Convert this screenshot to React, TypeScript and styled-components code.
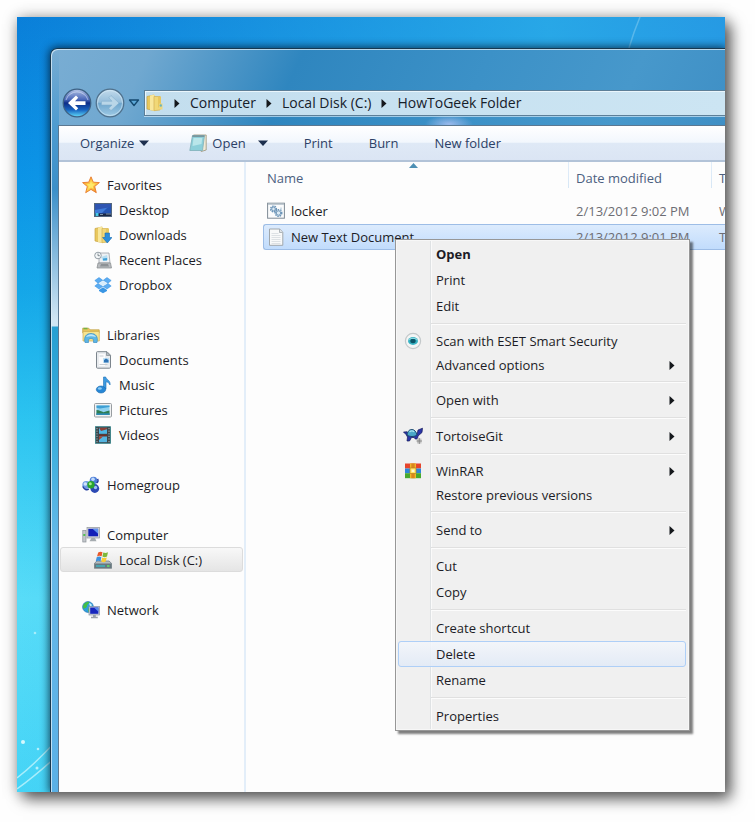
import React from "react";
import styled, { createGlobalStyle, css } from "styled-components";

const GlobalStyle = createGlobalStyle`
  * { box-sizing: border-box; }
  body {
    margin: 0;
    background: #fefefe;
    font-family: "Open Sans", "Noto Sans", sans-serif;
    font-size: 13px;
    line-height: 18px;
    color: #1c1c26;
  }
  button { font: inherit; color: inherit; border: 0; background: none; padding: 0; }
  svg { display: block; flex: none; }
`;

const Page = styled.div`
  display: flex;
  min-height: 100vh;
  padding: 17px 30px 30px 17px;
`;

const Desktop = styled.main`
  position: relative;
  flex: 1;
  min-width: 0;
  display: flex;
  padding: 31px 0 0 33px;
  overflow: clip;
  background:
    linear-gradient(90deg, rgba(50, 180, 235, 0) 0, rgba(50, 180, 235, 0.75) 75%, rgba(50, 165, 232, 0.7) 100%),
    linear-gradient(180deg, #0a7fd9 0, #0b93e6 20%, #14a6e8 35%, #2cc4f0 52%, #58dcf8 75%, #45d4f6 100%);
`;

const Shadow = styled.div`
  display: flex;
  flex: 1;
  min-width: 0;
  box-shadow: 6px 7px 14px rgba(0, 0, 0, 0.6), 0 0 14px rgba(0, 0, 0, 0.28);
`;

const Wallpaper = styled.svg`
  position: absolute;
  left: 0;
  bottom: 0;
`;

const TopStreak = styled.svg`
  position: absolute;
  top: 0;
  right: 80px;
`;

const Window = styled.section`
  position: relative;
  flex: 1;
  min-width: 0;
  display: flex;
  flex-direction: column;
  padding-left: 7px;
  border: solid #173850;
  border-width: 1px 0 0 1px;
  border-radius: 7px 0 0 0;
  box-shadow: 0 0 9px 1px rgba(0, 20, 40, 0.75), inset 1px 1px 0 rgba(225, 240, 250, 0.75);
  background:
    radial-gradient(ellipse 24px 9px at 398px 75px, rgba(165, 190, 240, 0.9), rgba(165, 190, 240, 0)),
    linear-gradient(180deg, rgba(115, 170, 208, 0) 0, #4d9bd0 80px, #3b8fc9 140px, #cfe5f3 270px, #cfe5f3 277px, #279fd2 278px, #3fb0de 400px, #68b9e9 500px, #5ab0e6 100%) 0 0 / 8px 100% no-repeat,
    linear-gradient(115deg, #79add3 0, #70a8d0 90px, #2f86bf 230px, #3c91c7 400px, #4798cb 540px, #3989c1 720px);
`;

const TitleBar = styled.header`
  height: 39px;
`;

const NavRow = styled.nav`
  display: flex;
  align-items: center;
  height: 30px;
  margin-bottom: 7px;
  padding-left: 4px;
`;

const Capsule = styled.div`
  display: flex;
  align-items: center;
  gap: 3px;
  margin-right: 4px;
`;

const AddressBar = styled.div`
  flex: 1;
  min-width: 0;
  display: flex;
  align-items: center;
  gap: 10px;
  height: 26px;
  padding-left: 1px;
  white-space: nowrap;
  overflow: hidden;
  font-size: 14px;
  color: #16202a;
  border: solid #5d7f98;
  border-width: 1px 0 1px 1px;
  box-shadow: inset 1px 1px 0 #eaf6fc, 0 1px 0 rgba(230, 245, 255, 0.6);
  background: linear-gradient(90deg, #c3deee, #cce5f3);
`;

const Crumb = styled.a`
  color: inherit;
  text-decoration: none;
`;

const Client = styled.div`
  flex: 1;
  display: flex;
  flex-direction: column;
  border: solid #5c7891;
  border-width: 1px 0 0 1px;
  background: #fdfdfd;
`;

const Toolbar = styled.div`
  display: flex;
  align-items: center;
  height: 36px;
  padding-left: 21px;
  white-space: nowrap;
  overflow: hidden;
  color: #2c4166;
  border-bottom: 2px solid #b2c3d8;
  background: linear-gradient(180deg, #ffffff 0, #f2f7fd 48%, #dfe9f6 50%, #dbe5f4 100%);
`;

const ToolButton = styled.button<{ $space: number }>`
  display: flex;
  align-items: center;
  gap: 5px;
  margin-right: ${(p) => p.$space}px;
`;

const Body = styled.div`
  flex: 1;
  display: flex;
  min-height: 0;
`;

const Sidebar = styled.aside`
  flex: none;
  width: 187px;
  padding: 10px 1px 20px;
  border-right: 2px solid #e3eef9;
`;

const Group = styled.div`
  margin-bottom: 25px;
`;

const Place = styled.a<{ $child?: boolean; $selected?: boolean }>`
  display: flex;
  align-items: center;
  gap: 7px;
  height: 25px;
  padding-left: ${(p) => (p.$child ? 33 : 21)}px;
  color: inherit;
  text-decoration: none;
  border: 1px solid transparent;
  border-radius: 3px;
  ${(p) =>
    p.$selected &&
    css`
      border-color: #dcdcdc;
      background: linear-gradient(#f8f8f8, #e5e5e5);
    `}
`;

const Content = styled.div`
  position: relative;
  flex: 1;
  min-width: 0;
  padding-left: 17px;
`;

const FileTable = styled.table`
  width: 100%;
  table-layout: fixed;
  border-spacing: 0;
  white-space: nowrap;
`;

const HeadCell = styled.th<{ $width?: number; $first?: boolean }>`
  position: relative;
  width: ${(p) => (p.$width ? `${p.$width}px` : "auto")};
  height: 36px;
  padding: 7px 0 0 ${(p) => (p.$first ? 4 : 8)}px;
  overflow: hidden;
  vertical-align: top;
  text-align: left;
  font-weight: 400;
  color: #4c6080;
  background: ${(p) =>
    p.$first ? "none" : "linear-gradient(#e2eefa, #d6e6f5) 0 0 / 1px 26px no-repeat"};
`;

const SortMark = styled.svg`
  position: absolute;
  top: 1px;
  left: 146px;
`;

const Cell = styled.td<{ $dim?: boolean }>`
  height: 26px;
  padding: 0 0 0 ${(p) => (p.$dim ? 8 : 4)}px;
  overflow: hidden;
  color: ${(p) => (p.$dim ? "#6d6d74" : "inherit")};
`;

const Row = styled.tr<{ $selected?: boolean }>`
  ${(p) =>
    p.$selected &&
    css`
      ${Cell} {
        border: solid #9dbde6;
        border-width: 1px 0;
        background: linear-gradient(#dcebfd, #c1dcfc);
      }
      ${Cell}:first-child {
        border-left-width: 1px;
        border-radius: 3px 0 0 3px;
        padding-left: 3px;
      }
    `}
`;

const FileName = styled.span`
  display: flex;
  align-items: center;
  gap: 6px;
`;

const Menu = styled.div`
  position: absolute;
  top: 77px;
  left: 149px;
  width: 295px;
  padding: 1px 3px 1px 2px;
  border: 1px solid #979797;
  box-shadow: 3px 3px 2px rgba(0, 0, 0, 0.5), inset 0 0 0 1px #f7f7f7;
  background: linear-gradient(90deg, #dfe2e4 1px, #fafafa 1px) 34px 0 / 2px 100% no-repeat #f0f0f0;
`;

const MenuItem = styled.button<{ $short?: boolean; $bold?: boolean; $hot?: boolean }>`
  display: grid;
  grid-template-columns: 37px 1fr 16px;
  align-items: center;
  width: 100%;
  height: ${(p) => (p.$short ? 24 : 26)}px;
  text-align: left;
  white-space: nowrap;
  font-weight: ${(p) => (p.$bold ? 700 : 400)};
  border: 1px solid ${(p) => (p.$hot ? "#aecff7" : "transparent")};
  border-radius: 3px;
  background: ${(p) =>
    p.$hot ? "linear-gradient(rgba(243, 246, 251, 0.85), rgba(225, 234, 247, 0.85))" : "none"};
`;

const IconSlot = styled.span`
  display: flex;
  justify-content: center;
  padding-right: 9px;
`;

const Separator = styled.hr`
  height: 2px;
  margin: 4px 0 4px 33px;
  border: 0;
  border-top: 1px solid #e0e0e0;
  background: #fcfcfc;
`;

/* ---------- icons ---------- */

const Icon = ({ children, size = 18 }: { children: React.ReactNode; size?: number }) => (
  <svg width={size} height={size} viewBox="0 0 18 18" aria-hidden="true">
    {children}
  </svg>
);

const StarIcon = () => (
  <Icon>
    <defs>
      <linearGradient id="star" x1="0" y1="0" x2="1" y2="1">
        <stop offset="0" stopColor="#f58a1f" />
        <stop offset=".5" stopColor="#ffd94f" />
        <stop offset="1" stopColor="#f07a1c" />
      </linearGradient>
    </defs>
    <path d="M9 .8l2.3 5.4 6.1.4-4.7 3.9 1.6 6.2L9 13.4l-5.3 3.3 1.6-6.2L.6 6.6l6.1-.4z" fill="url(#star)" stroke="#e8792b" strokeWidth=".9" strokeLinejoin="round" />
    <path d="M9 5l1.2 3 3 .3-2.3 2 .6 2.7L9 11.5l-2.6 1.3.6-2.7-2.2-1.9 3-.3z" fill="#ffe96b" />
  </Icon>
);

const DesktopIcon = () => (
  <Icon>
    <rect x=".5" y="2.500" width="17" height="13" fill="#2455b4" stroke="#52667f" />
    <path d="M1 3h16L8 12H1z" fill="#3f7bd8" />
    <path d="M1 3h16v3L1 9z" fill="#2f55b2" />
    <rect x="1" y="12.500" width="16" height="2.500" fill="#1a2743" />
    <rect x="1.500" y="12" width="3" height="3" fill="#46c7e6" />
    <path d="M12 13h5M6 13.500h3" stroke="#7d93a7" />
  </Icon>
);

const FolderBook = () => (
  <>
    <path d="M1 2.500L8 1v15.500L1 15z" fill="#e9c85f" stroke="#c9a543" strokeWidth=".7" />
    <path d="M4 1.500L8.500 .6v16.300L4 16z" fill="#f8e79c" />
    <path d="M8 2.500h6V16l-6 .7z" fill="#f1d877" stroke="#d1b055" strokeWidth=".7" />
    <path d="M12 2.500h3v11h-3z" fill="#e7c75f" />
  </>
);

const DownloadsIcon = () => (
  <Icon>
    <FolderBook />
    <path d="M11 7h4.500v4.500H18L13.300 17 8.600 11.500H11z" fill="#2b8edb" stroke="#176cb3" strokeWidth=".6" />
  </Icon>
);

const FolderIcon = () => (
  <Icon>
    <FolderBook />
    <rect x="13" y="9.500" width="3.500" height="6" fill="#efd67c" />
    <circle cx="14.800" cy="11.500" r="1.200" fill="#6cb6bd" />
  </Icon>
);

const RecentIcon = () => (
  <Icon>
    <path d="M5 2h10l1 10H5z" fill="#eef1f4" stroke="#9aa0a6" strokeWidth=".8" />
    <path d="M7 6l6-2 1 5-5 1z" fill="#b8def1" />
    <path d="M9 7.500l4-.5v2.500H9z" fill="#3fa0d8" />
    <path d="M4 12h12.500l1 5H3z" fill="#b9bcbf" stroke="#85898d" strokeWidth=".7" />
    <path d="M7 13h7l1 2.500H6z" fill="#8c9195" />
    <circle cx="4" cy="4.500" r="3.300" fill="#f4f7f9" stroke="#8a959d" strokeWidth=".9" />
    <path d="M4 2.500v2.200h1.800" stroke="#65727a" fill="none" strokeWidth=".8" />
  </Icon>
);

const DropboxIcon = () => (
  <Icon>
    <path d="M5 1.500L.8 4.500 4 7.200 8.800 4.300zM13 1.500l4.200 3L14 7.200 9.200 4.300zM.8 10L4 7.400l4.800 3L5 13zM17.200 10L14 7.400l-4.800 3L13 13z" fill="#5cacf1" stroke="#318fe0" strokeWidth=".5" />
    <path d="M9 11.300l-4 2.700v1l4 2.200 4-2.200v-1z" fill="#3a96e4" />
    <path d="M9 4.800l4 2.500-4 2.600-4-2.600z" fill="#d8edfc" />
  </Icon>
);

const LibrariesIcon = () => (
  <Icon>
    <path d="M.7 2.200h6l1.500 1.600h9v3H.7z" fill="#e8c55d" stroke="#bf9c3d" strokeWidth=".7" />
    <path d="M1.500 1.800h4v1.500h-4z" fill="#75b344" />
    <path d="M1 5.500h16.300v9.500H1z" fill="#f7e491" stroke="#cfae52" strokeWidth=".7" />
    <path d="M3 16.500c-1.500-6 1.500-9 6-9s7.500 3 6 9h-3.500c.5-3-.5-4-2.500-4s-3 1-2.500 4z" fill="#5cb6e6" stroke="#398ec4" strokeWidth=".7" />
    <path d="M4 11c1-2 3-2.800 5-2.800s4 .8 5 2.800c-3-1-7-1-10 0z" fill="#bfe6f8" />
  </Icon>
);

const DocumentsIcon = () => (
  <Icon>
    <path d="M2.500 1.500Q2.500.7 3.300.7H13l3.500 3.500v12q0 1-1 1h-12q-1 0-1-1z" fill="#e9ecef" stroke="#7c858d" />
    <path d="M5 3h6v12H5z" fill="#fbfbfc" />
    <path d="M12.500 1v3.500H16z" fill="#b9c1c8" stroke="#7c858d" strokeWidth=".7" />
    <rect x="9" y="7" width="6" height="5" fill="#bfe1f4" />
    <path d="M10 11.500V9l2-1.500L14.500 9v2.500z" fill="#2e72b5" />
    <path d="M5.500 5h4M5.500 13.500h8" stroke="#c6cdd3" />
  </Icon>
);

const MusicIcon = () => (
  <Icon>
    <path d="M9.500 1h2.200c.5 2.500 5.200 3.500 4.300 8-.8-2-2.200-3-4-3.200V13H9.500z" fill="#3d9ae0" stroke="#1e72b8" strokeWidth=".6" />
    <ellipse cx="7" cy="13.500" rx="4.700" ry="3.500" fill="#2687d6" stroke="#1a68ab" strokeWidth=".6" />
    <ellipse cx="5.800" cy="12.500" rx="2" ry="1.200" fill="#8ccbf4" />
  </Icon>
);

const PicturesIcon = () => (
  <Icon>
    <rect x=".5" y="2.500" width="17" height="13.500" rx="1" fill="#f1f2f3" stroke="#989da1" />
    <rect x="2.500" y="4.500" width="13" height="9.500" fill="#8fd2f0" />
    <path d="M2.500 4.500h13V6L6 7.500l-3.500-.8z" fill="#3e9fd4" />
    <path d="M2.500 9c3 .2 5 1.500 7 2.200 2-.6 4-1.400 6-1.600V14h-13z" fill="#2f7d52" />
    <path d="M2.500 12.300h13V14h-13z" fill="#2d8ab4" />
  </Icon>
);

const VideosIcon = () => (
  <Icon>
    <rect x="1.500" y=".7" width="15" height="16.600" fill="#3c474c" stroke="#2e7f86" strokeWidth=".8" />
    <path d="M3 2v14.500M15 2v14.500" stroke="#a9b8bc" strokeWidth="1" strokeDasharray="1.200 1.400" />
    <rect x="5" y="1.800" width="8" height="6" fill="#4fb6e3" />
    <path d="M5 1.800h8v1.500L7 5z" fill="#8c4036" />
    <path d="M5 8.500h8v2H5z" fill="#6e3028" />
    <rect x="5" y="10.500" width="8" height="5.700" fill="#55b4e0" />
    <path d="M5 10.500h4L5 14z" fill="#a8442f" />
  </Icon>
);

const HomegroupIcon = () => (
  <Icon>
    <circle cx="11.500" cy="4.500" r="3.800" fill="#4d7fd8" />
    <circle cx="11" cy="3.300" r="1.800" fill="#c1dafa" />
    <circle cx="4.300" cy="9" r="4" fill="#6f9de6" />
    <circle cx="3.300" cy="8" r="1.800" fill="#d0e3fc" />
    <circle cx="12.800" cy="12.500" r="4.400" fill="#2c49b4" />
    <circle cx="13.500" cy="11.500" r="1.700" fill="#9fc0f4" />
    <path d="M.8 10.500c1.500 3 4 4 6 2.500M14.500 7c1.500-1 2-2.500 1-4" stroke="#233c9e" strokeWidth="1.500" fill="none" />
    <circle cx="9" cy="8.800" r="3.700" fill="#2aa52f" />
    <circle cx="8.300" cy="7.800" r="1.500" fill="#a5ea8e" />
  </Icon>
);

const ComputerIcon = () => (
  <Icon>
    <rect x=".8" y="4.500" width="3.200" height="11.500" fill="#c4c8cc" stroke="#8b9196" strokeWidth=".7" />
    <rect x="1.300" y="8" width="2" height="2" fill="#51c150" />
    <rect x="5" y="1.500" width="12.500" height="10.500" fill="#d6d8da" stroke="#90969b" strokeWidth=".7" />
    <rect x="6.300" y="2.800" width="9.800" height="7.500" fill="#1420b8" />
    <path d="M10.500 2.800h5.600v5z" fill="#5f92ee" />
    <path d="M9.500 12h3.500l1.500 3.300H7.500z" fill="#a6acb0" />
  </Icon>
);

const DiskIcon = () => (
  <Icon>
    <path d="M3 10h12l2.700 2.500v4.800H.3v-4.800z" fill="#b3bbc0" stroke="#69757c" strokeWidth=".7" />
    <path d="M.5 12.500h17v4.600H.5z" fill="#67787f" />
    <path d="M2 15h9" stroke="#3fb5c2" strokeWidth="1.500" />
    <path d="M13 15h2.500" stroke="#5fe56d" strokeWidth="1.500" />
    <path d="M4.200 1.500Q6.500 0 8.500 1.200L7.600 5.300Q5.400 4.200 3 5.500z" fill="#e8582a" />
    <path d="M9.300 1.600Q11.500 2.700 14 1.300L13 5.500Q10.700 6.800 8.400 5.600z" fill="#7db83b" />
    <path d="M2.700 6.300Q5.200 5 7.400 6.200L6.500 10.300Q4.200 9.200 1.700 10.500z" fill="#3c91dd" />
    <path d="M8.200 6.500Q10.400 7.700 12.800 6.400L11.700 10.500Q9.500 11.800 7.300 10.600z" fill="#f9cc35" />
  </Icon>
);

const NetworkIcon = () => (
  <Icon>
    <circle cx="6" cy="6" r="5.400" fill="#2d9fdc" stroke="#2574b4" strokeWidth=".7" />
    <path d="M2 3c2-2 4-2.500 5-2 .5 2-2 2-2 4s-2 1.500-3 3C.6 6.500.8 4.500 2 3zM6 7.500h4L8 11l-2-.5z" fill="#43bf47" />
    <path d="M7 2.500c1-.5 2.500.5 3 2l-2 .8z" fill="#c9f0fa" />
    <rect x="7" y="5.500" width="10.500" height="8.500" fill="#ccd3da" stroke="#8791a0" strokeWidth=".7" />
    <rect x="8.200" y="6.500" width="8.200" height="6.300" fill="#1726bd" />
    <path d="M12 6.500h4.400v4.300z" fill="#588aec" />
    <path d="M11 14h2.800v1.800h2v1.400H9v-1.400h2z" fill="#9ba2aa" />
  </Icon>
);

const NotepadIcon = () => (
  <Icon>
    <path d="M4.500 1h12.700v15l-5 1.500z" fill="#efe9d6" stroke="#9b9277" strokeWidth=".8" />
    <path d="M3.500 1.500h12L13.500 16.500H.8z" fill="#8ccfd9" stroke="#7fb0b9" strokeWidth=".8" />
    <path d="M4.500 4h8.800l-.8 6L3.500 12z" fill="#b9e6ea" />
    <path d="M3.500 1.500h12l-.2 1.300H3.200z" fill="#72848b" />
  </Icon>
);

const Gear = ({ cx, cy, r }: { cx: number; cy: number; r: number }) => (
  <g>
    <circle cx={cx} cy={cy} r={r} fill="none" stroke="#6a94b8" strokeWidth="1.600" strokeDasharray="1.500 .8" />
    <circle cx={cx} cy={cy} r={r - 1} fill="#dcebf5" stroke="#5d88ad" strokeWidth=".8" />
  </g>
);

const BatchIcon = () => (
  <Icon>
    <rect x=".6" y="1.200" width="16.800" height="15" fill="#fafbfc" stroke="#7f8b95" />
    <path d="M1 2.200h16" stroke="#b6c2cc" strokeWidth="1.300" />
    <Gear cx={6.5} cy={7} r={2.8} />
    <Gear cx={11.5} cy={11} r={3.2} />
    <path d="M14 5.500v4" stroke="#a9c2d4" />
  </Icon>
);

const TextFileIcon = () => (
  <Icon>
    <path d="M2.500 1h10.300l3 3.300v13H2.500z" fill="#f8f9f9" stroke="#a0a7ac" />
    <path d="M12.500 1v3.500h3.200" fill="#dfe4e7" stroke="#a0a7ac" strokeWidth=".8" />
    <path d="M4.500 5.500h7M4.500 7.500h9M4.500 9.500h9M4.500 11.500h9M4.500 13.500h9M4.500 15.500h9" stroke="#dde1e4" />
  </Icon>
);

const EsetIcon = () => (
  <Icon>
    <circle cx="9" cy="9" r="7.600" fill="#f3f5f5" stroke="#c3c8ca" strokeWidth="1.200" />
    <ellipse cx="9" cy="9" rx="5" ry="3.900" fill="#39b3c4" />
    <ellipse cx="9" cy="9" rx="2.700" ry="2.200" fill="#0c5568" />
    <path d="M4.800 8c2-2.300 6.400-2.300 8.400 0" stroke="#9de3ea" fill="none" />
  </Icon>
);

const TortoiseIcon = () => (
  <svg width="20" height="18" viewBox="0 0 20 18" aria-hidden="true">
    <path d="M.5 5l3.500-.2L6 8l8-.5 1-4.500 4.500-1.800L19 5.500 15 9l-.5 3h-2.300l-1-1.500H8.500L6.500 14H4l.5-4L3 7.500z" fill="#2a35a8" stroke="#161b5c" strokeWidth=".7" />
    <path d="M4 8c.5-4 2.500-5.500 5-5.500S13.500 5 14 8c-3 2-7 2-10 0z" fill="#4aa7c9" stroke="#153f66" strokeWidth=".9" />
    <path d="M6.500 5c1.500-1.500 3.500-1.500 4.500 0" stroke="#a8e4ef" strokeWidth="1.200" fill="none" />
    <path d="M14 11.500h4.500v5H14z" fill="#c4c4c4" />
    <path d="M13.500 14h5.500M16.300 11v6" stroke="#858585" strokeWidth=".9" />
  </svg>
);

const WinrarIcon = () => (
  <Icon>
    <path d="M1 1.500h16v5H1z" fill="#e6452c" />
    <path d="M1 6.500h16v4.700H1z" fill="#2d86da" />
    <path d="M1 11.200h16v5H1z" fill="#47a92d" />
    <path d="M6 1.500h6v14.700H6z" fill="#f0b92a" />
    <path d="M7.300 1.500h3.400v14.700H7.300z" fill="#d9861d" />
    <rect x="6" y="6" width="6" height="5.500" fill="#ffe868" stroke="#b97f1f" strokeWidth=".7" />
    <rect x="7.700" y="7.700" width="2.600" height="2.300" fill="#fff9d5" />
  </Icon>
);

const BackIcon = () => (
  <svg width="30" height="30" viewBox="0 0 30 30" aria-hidden="true">
    <defs>
      <linearGradient id="back" x1="0" y1="0" x2="0" y2="1">
        <stop offset="0" stopColor="#b3c3e6" />
        <stop offset=".38" stopColor="#4866b8" />
        <stop offset=".5" stopColor="#0d2c86" />
        <stop offset=".75" stopColor="#1763c0" />
        <stop offset="1" stopColor="#62dcfa" />
      </linearGradient>
    </defs>
    <circle cx="15" cy="15" r="13.800" fill="url(#back)" stroke="#3d6184" strokeWidth="1.200" />
    <path d="M4 12a11.500 11.500 0 0 1 22 0" fill="none" stroke="#d9e4f5" strokeOpacity=".6" />
    <path d="M6 15l8-7.500 2.200 2.300-3.200 3.400h10.500v3.800H13l3.200 3.300-2.200 2.300z" fill="#fff" />
  </svg>
);

const ForwardIcon = () => (
  <svg width="30" height="30" viewBox="0 0 30 30" aria-hidden="true">
    <defs>
      <linearGradient id="fwd" x1="0" y1="0" x2="0" y2="1">
        <stop offset="0" stopColor="#c3dbec" />
        <stop offset=".47" stopColor="#94bdda" />
        <stop offset=".52" stopColor="#6fa6cd" />
        <stop offset="1" stopColor="#9fcbe6" />
      </linearGradient>
    </defs>
    <circle cx="15" cy="15" r="13.800" fill="url(#fwd)" stroke="#50718c" strokeWidth="1.200" />
    <circle cx="15" cy="15" r="12.500" fill="none" stroke="#d9ecf8" strokeOpacity=".6" />
    <path d="M24 15l-8-7.500-2.200 2.300 3.200 3.400H6.500v3.800H17l-3.200 3.300 2.200 2.300z" fill="#b9d6e8" stroke="#84b0cf" strokeWidth=".6" />
  </svg>
);

const HistoryIcon = () => (
  <svg width="12" height="8" viewBox="0 0 12 8" aria-hidden="true">
    <path d="M1.500 1h9L6 6.500z" fill="#5ba8d8" stroke="#14486f" strokeWidth="1.300" strokeLinejoin="round" />
  </svg>
);

const RightArrow = () => (
  <svg width="6" height="9" viewBox="0 0 6 9" aria-hidden="true">
    <path d="M.5 0L5.500 4.500.5 9z" fill="#15181c" />
  </svg>
);

const DownArrow = () => (
  <svg width="10" height="6" viewBox="0 0 10 6" aria-hidden="true">
    <path d="M0 .5h10L5 6z" fill="#1d2f4e" />
  </svg>
);

/* ---------- data ---------- */

type PlaceData = { label: string; icon: React.ReactNode; selected?: boolean };

const places: PlaceData[][] = [
  [
    { label: "Favorites", icon: <StarIcon /> },
    { label: "Desktop", icon: <DesktopIcon /> },
    { label: "Downloads", icon: <DownloadsIcon /> },
    { label: "Recent Places", icon: <RecentIcon /> },
    { label: "Dropbox", icon: <DropboxIcon /> },
  ],
  [
    { label: "Libraries", icon: <LibrariesIcon /> },
    { label: "Documents", icon: <DocumentsIcon /> },
    { label: "Music", icon: <MusicIcon /> },
    { label: "Pictures", icon: <PicturesIcon /> },
    { label: "Videos", icon: <VideosIcon /> },
  ],
  [{ label: "Homegroup", icon: <HomegroupIcon /> }],
  [
    { label: "Computer", icon: <ComputerIcon /> },
    { label: "Local Disk (C:)", icon: <DiskIcon />, selected: true },
  ],
  [{ label: "Network", icon: <NetworkIcon /> }],
];

type Entry = {
  label: string;
  icon?: React.ReactNode;
  sub?: boolean;
  short?: boolean;
  bold?: boolean;
  hot?: boolean;
};

const menu: Entry[][] = [
  [{ label: "Open", bold: true }, { label: "Print" }, { label: "Edit" }],
  [
    { label: "Scan with ESET Smart Security", icon: <EsetIcon />, short: true },
    { label: "Advanced options", sub: true, short: true },
  ],
  [{ label: "Open with", sub: true }],
  [{ label: "TortoiseGit", icon: <TortoiseIcon />, sub: true }],
  [
    { label: "WinRAR", icon: <WinrarIcon />, sub: true, short: true },
    { label: "Restore previous versions", short: true },
  ],
  [{ label: "Send to", sub: true }],
  [{ label: "Cut" }, { label: "Copy" }],
  [{ label: "Create shortcut" }, { label: "Delete", hot: true }, { label: "Rename" }],
  [{ label: "Properties" }],
];

const crumbs = ["Computer", "Local Disk (C:)", "HowToGeek Folder"];

const ContextMenu = () => (
  <Menu role="menu">
    {menu.map((group, g) => (
      <React.Fragment key={g}>
        {g > 0 && <Separator />}
        {group.map((e) => (
          <MenuItem key={e.label} type="button" role="menuitem" $short={e.short} $bold={e.bold} $hot={e.hot}>
            <IconSlot>{e.icon}</IconSlot>
            <span>{e.label}</span>
            {e.sub && <RightArrow />}
          </MenuItem>
        ))}
      </React.Fragment>
    ))}
  </Menu>
);

export default function App() {
  return (
    <>
      <GlobalStyle />
      <Page>
        <Shadow>
          <Desktop>
            <Wallpaper width="40" height="180" viewBox="0 0 40 180" aria-hidden="true">
              <path d="M0 166Q18 152 40 128M0 177Q18 164 40 144" fill="none" stroke="#c9f6fc" strokeOpacity=".75" strokeWidth="1.500" />
              <circle cx="6" cy="130" r="2" fill="#d5f8fd" />
              <circle cx="21" cy="137" r="1.300" fill="#b5f0fb" />
              <circle cx="20" cy="156" r="1.500" fill="#b5f0fb" />
              <circle cx="18" cy="21" r="1.300" fill="#a5edfa" />
            </Wallpaper>
            <TopStreak width="20" height="31" viewBox="0 0 20 31" aria-hidden="true">
              <path d="M15 0Q9 14 4 31" fill="none" stroke="#a5dcf5" strokeOpacity=".4" strokeWidth="1.500" />
            </TopStreak>
            <Window aria-label="HowToGeek Folder">
              <TitleBar />
              <NavRow>
                <Capsule>
                  <button type="button" aria-label="Back">
                    <BackIcon />
                  </button>
                  <button type="button" aria-label="Forward">
                    <ForwardIcon />
                  </button>
                  <button type="button" aria-label="Recent pages">
                    <HistoryIcon />
                  </button>
                </Capsule>
                <AddressBar>
                  <FolderIcon />
                  {crumbs.map((c) => (
                    <React.Fragment key={c}>
                      <RightArrow />
                      <Crumb href="#">{c}</Crumb>
                    </React.Fragment>
                  ))}
                </AddressBar>
              </NavRow>
              <Client>
                <Toolbar>
                  <ToolButton type="button" $space={40}>
                    Organize <DownArrow />
                  </ToolButton>
                  <ToolButton type="button" $space={12}>
                    <NotepadIcon /> Open
                  </ToolButton>
                  <ToolButton type="button" aria-label="Open with" $space={36}>
                    <DownArrow />
                  </ToolButton>
                  <ToolButton type="button" $space={36}>
                    Print
                  </ToolButton>
                  <ToolButton type="button" $space={36}>
                    Burn
                  </ToolButton>
                  <ToolButton type="button" $space={0}>
                    New folder
                  </ToolButton>
                </Toolbar>
                <Body>
                  <Sidebar>
                    {places.map((group, g) => (
                      <Group key={g}>
                        {group.map((p, i) => (
                          <Place key={p.label} href="#" $child={i > 0} $selected={p.selected}>
                            {p.icon}
                            {p.label}
                          </Place>
                        ))}
                      </Group>
                    ))}
                  </Sidebar>
                  <Content>
                    <FileTable>
                      <thead>
                        <tr>
                          <HeadCell $width={305} $first>
                            Name
                            <SortMark width="9" height="5" viewBox="0 0 9 5" aria-hidden="true">
                              <path d="M0 5L4.500 0 9 5z" fill="#4e90b4" />
                            </SortMark>
                          </HeadCell>
                          <HeadCell $width={143}>Date modified</HeadCell>
                          <HeadCell>Type</HeadCell>
                        </tr>
                      </thead>
                      <tbody>
                        <Row>
                          <Cell>
                            <FileName>
                              <BatchIcon />
                              locker
                            </FileName>
                          </Cell>
                          <Cell $dim>2/13/2012 9:02 PM</Cell>
                          <Cell $dim>Windows Batch File</Cell>
                        </Row>
                        <Row $selected>
                          <Cell>
                            <FileName>
                              <TextFileIcon />
                              New Text Document
                            </FileName>
                          </Cell>
                          <Cell $dim>2/13/2012 9:01 PM</Cell>
                          <Cell $dim>Text Document</Cell>
                        </Row>
                      </tbody>
                    </FileTable>
                    <ContextMenu />
                  </Content>
                </Body>
              </Client>
            </Window>
          </Desktop>
        </Shadow>
      </Page>
    </>
  );
}
